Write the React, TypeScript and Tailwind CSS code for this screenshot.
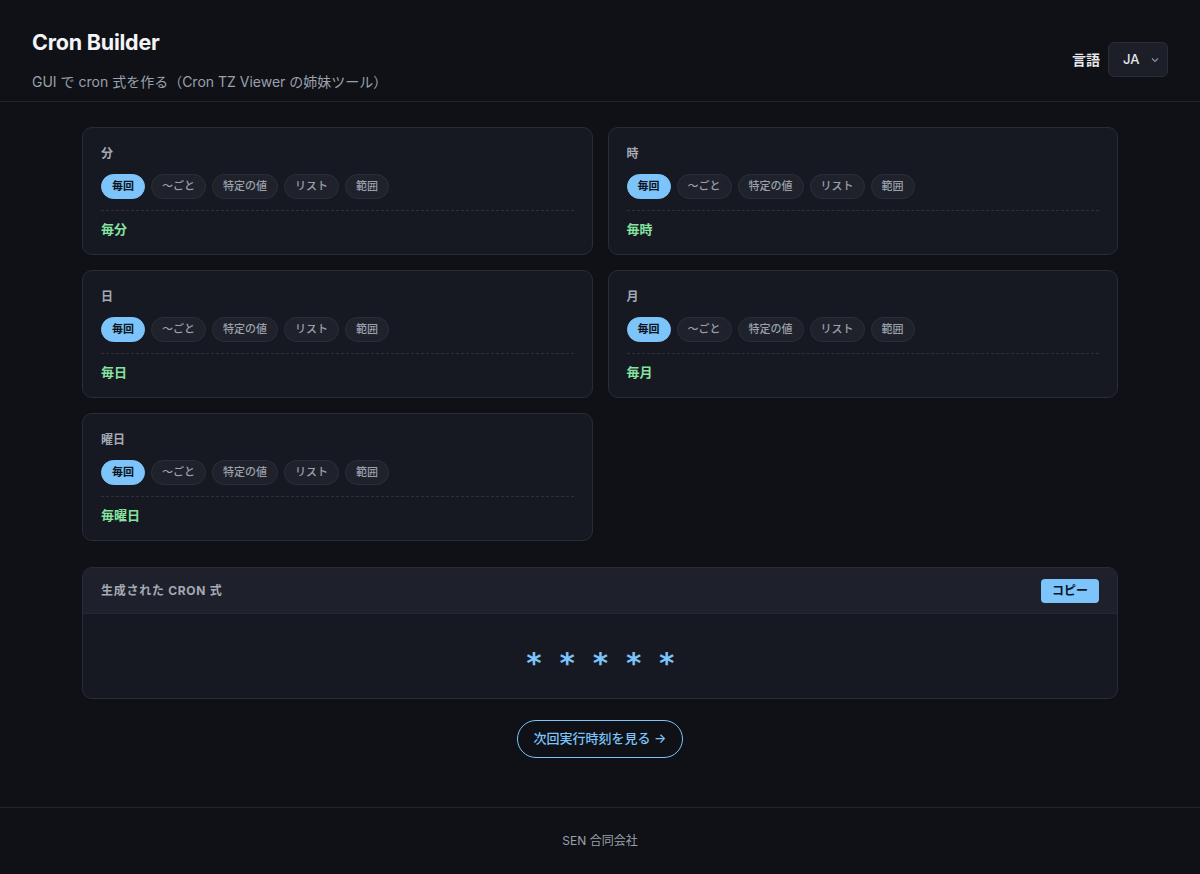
import { useState } from 'react';

const fields = [
  { label: '分', result: '毎分' },
  { label: '時', result: '毎時' },
  { label: '日', result: '毎日' },
  { label: '月', result: '毎月' },
  { label: '曜日', result: '毎曜日' },
];

const modes = ['毎回', '〜ごと', '特定の値', 'リスト', '範囲'];

function FieldCard({ label, result }: { label: string; result: string }) {
  const [mode, setMode] = useState(0);
  return (
    <div className="rounded-[10px] border border-[#2a2d37] bg-[#161922] px-[18px] pt-[17px] pb-[15px]">
      <p className="text-[12px] font-bold leading-[18px] text-[#a4a9b6]">{label}</p>
      <div className="mt-[11px] flex gap-[6px]">
        {modes.map((m, i) => (
          <button
            key={m}
            onClick={() => setMode(i)}
            className={
              i === mode
                ? 'h-[25px] rounded-full border border-[#7cc4fa] bg-[#7cc4fa] px-[10px] text-[11px] font-bold text-[#0d1320]'
                : 'h-[25px] rounded-full border border-[#2b2f39] bg-[#1f222b] px-[10px] text-[11px] font-medium text-[#9aa0ac]'
            }
          >
            {m}
          </button>
        ))}
      </div>
      <div className="mt-[11px] border-t border-dashed border-[#2d313b]" />
      <p className="mt-[8px] text-[13px] font-bold leading-[20px] text-[#86e3a0]">{result}</p>
    </div>
  );
}

export default function App() {
  return (
    <div
      className="flex min-h-screen flex-col bg-[#0f1116] text-white"
      style={{ fontFamily: 'Inter, "Noto Sans CJK JP", sans-serif' }}
    >
      <header className="flex items-center justify-between border-b border-[#22252e] px-8 pt-[28px] pb-[8px]">
        <div>
          <h1 className="text-[21.5px] font-bold leading-[28px] tracking-[-0.01em] text-[#f3f4f6]">Cron Builder</h1>
          <p className="mt-[15px] text-[14px] leading-[22px] text-[#9aa0ac]">
            GUI で cron 式を作る（Cron TZ Viewer の姉妹ツール）
          </p>
        </div>
        <div className="mt-[6px] flex items-center gap-[8px] self-start pt-[8px]">
          <span className="text-[14px] font-bold text-[#e5e7eb]">言語</span>
          <div className="flex h-[35px] w-[60px] items-center justify-between rounded-[6px] border border-[#2a2d37] bg-[#1c1f28] pl-[14px] pr-[7px]">
            <span className="text-[13px] font-medium text-[#e5e7eb]">JA</span>
            <svg width="10" height="10" viewBox="0 0 10 10" fill="none" stroke="#8b909c" strokeWidth="1.2">
              <path d="M2 3.5 5 6.5 8 3.5" />
            </svg>
          </div>
        </div>
      </header>

      <main className="mx-auto w-[1036px] flex-1 pt-[25px] pb-[48px]">
        <div className="grid grid-cols-2 gap-x-[15px] gap-y-[15px]">
          {fields.map((f) => (
            <FieldCard key={f.label} label={f.label} result={f.result} />
          ))}
        </div>

        <div className="mt-[26px] overflow-hidden rounded-[10px] border border-[#2a2d37] bg-[#161922]">
          <div className="flex h-[46px] items-center justify-between border-b border-[#252832] bg-[#1e212b] px-[18px]">
            <span className="text-[12px] font-bold tracking-[0.06em] text-[#a4a9b6]">生成された CRON 式</span>
            <button className="h-[24px] rounded-[4px] bg-[#7cc4fa] px-[11px] text-[12px] font-bold text-[#0d1320]">
              コピー
            </button>
          </div>
          <div className="flex h-[84px] items-center justify-center pt-[14px]">
            <span
              className="text-[29px] font-bold leading-none tracking-[-0.03em] text-[#7cc4fa]"
              style={{ fontFamily: '"DejaVu Sans Mono", monospace' }}
            >
              * * * * *
            </span>
          </div>
        </div>

        <div className="mt-[21px] flex justify-center">
          <button className="h-[38px] rounded-full border border-[#7cc4fa] px-[16px] text-[13px] font-medium text-[#7cc4fa]">
            次回実行時刻を見る →
          </button>
        </div>
      </main>

      <footer className="border-t border-[#22252e] py-[24px] text-center text-[12px] text-[#9aa0ac]">
        SEN 合同会社
      </footer>
    </div>
  );
}
